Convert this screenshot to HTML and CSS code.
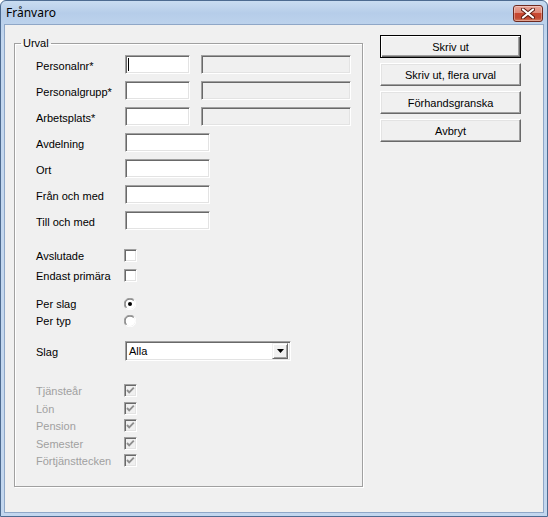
FILE: index.html
```html
<!DOCTYPE html>
<html>
<head>
<meta charset="utf-8">
<link rel="stylesheet" href="styles.css">
</head>
<body>
<div class="window">
  <div class="titlebar">
    <span class="title">Frånvaro</span>
    <div class="close">
      <svg width="14" height="11" viewBox="0 0 14 11"><path d="M2 1.5 L12 9.5 M12 1.5 L2 9.5" stroke="#5a1a10" stroke-width="4" stroke-linecap="round"/><path d="M2 1.5 L12 9.5 M12 1.5 L2 9.5" stroke="#fff" stroke-width="2.2" stroke-linecap="round"/></svg>
    </div>
  </div>
  <div class="client">
    <fieldset class="group">
      <legend>Urval</legend>
      <div class="inner">
        <div class="fields">
          <div class="frow"><span class="lbl">Personalnr*</span><div class="tb tb-s"><span class="caret"></span></div><div class="tb tb-w off"></div></div>
          <div class="frow"><span class="lbl">Personalgrupp*</span><div class="tb tb-s"></div><div class="tb tb-w off"></div></div>
          <div class="frow"><span class="lbl">Arbetsplats*</span><div class="tb tb-s"></div><div class="tb tb-w off"></div></div>
          <div class="frow"><span class="lbl">Avdelning</span><div class="tb tb-m"></div></div>
          <div class="frow"><span class="lbl">Ort</span><div class="tb tb-m"></div></div>
          <div class="frow"><span class="lbl">Från och med</span><div class="tb tb-m"></div></div>
          <div class="frow"><span class="lbl">Till och med</span><div class="tb tb-m"></div></div>
        </div>
        <div class="checks">
          <div class="crow"><span class="lbl lbl-c">Avslutade</span><span class="cb"></span></div>
          <div class="crow"><span class="lbl lbl-c">Endast primära</span><span class="cb"></span></div>
        </div>
        <div class="radios">
          <div class="rrow"><span class="lbl lbl-c">Per slag</span>
            <svg class="rb" width="12" height="12" viewBox="0 0 12 12"><circle cx="6" cy="6" r="5" fill="#fff"/><path d="M10.2 1.8 A5.9 5.9 0 0 0 1.8 10.2" fill="none" stroke="#a0a0a0" stroke-width="1"/><path d="M9.5 2.5 A4.9 4.9 0 0 0 2.5 9.5" fill="none" stroke="#696969" stroke-width="1"/><path d="M1.8 10.2 A5.9 5.9 0 0 0 10.2 1.8" fill="none" stroke="#fff" stroke-width="1"/><circle cx="6" cy="6" r="2" fill="#000"/></svg>
          </div>
          <div class="rrow"><span class="lbl lbl-c">Per typ</span>
            <svg class="rb" width="12" height="12" viewBox="0 0 12 12"><circle cx="6" cy="6" r="5" fill="#fff"/><path d="M10.2 1.8 A5.9 5.9 0 0 0 1.8 10.2" fill="none" stroke="#a0a0a0" stroke-width="1"/><path d="M9.5 2.5 A4.9 4.9 0 0 0 2.5 9.5" fill="none" stroke="#696969" stroke-width="1"/><path d="M1.8 10.2 A5.9 5.9 0 0 0 10.2 1.8" fill="none" stroke="#fff" stroke-width="1"/></svg>
          </div>
        </div>
        <div class="srow"><span class="lbl">Slag</span>
          <div class="combo"><span class="combo-text">Alla</span><span class="combo-btn"><svg width="7" height="4" viewBox="0 0 7 4"><path d="M0 0 H7 L3.5 4 Z" fill="#000"/></svg></span></div>
        </div>
        <div class="dchecks">
          <div class="drow"><span class="lbl lbl-c dis">Tjänsteår</span><span class="cb cb-off"><svg width="11" height="11" viewBox="0 0 11 11"><path d="M2 5 L4.2 7.3 L8.8 2.7" fill="none" stroke="#8f8f8f" stroke-width="1.9"/></svg></span></div>
          <div class="drow"><span class="lbl lbl-c dis">Lön</span><span class="cb cb-off"><svg width="11" height="11" viewBox="0 0 11 11"><path d="M2 5 L4.2 7.3 L8.8 2.7" fill="none" stroke="#8f8f8f" stroke-width="1.9"/></svg></span></div>
          <div class="drow"><span class="lbl lbl-c dis">Pension</span><span class="cb cb-off"><svg width="11" height="11" viewBox="0 0 11 11"><path d="M2 5 L4.2 7.3 L8.8 2.7" fill="none" stroke="#8f8f8f" stroke-width="1.9"/></svg></span></div>
          <div class="drow"><span class="lbl lbl-c dis">Semester</span><span class="cb cb-off"><svg width="11" height="11" viewBox="0 0 11 11"><path d="M2 5 L4.2 7.3 L8.8 2.7" fill="none" stroke="#8f8f8f" stroke-width="1.9"/></svg></span></div>
          <div class="drow"><span class="lbl lbl-c dis">Förtjänsttecken</span><span class="cb cb-off"><svg width="11" height="11" viewBox="0 0 11 11"><path d="M2 5 L4.2 7.3 L8.8 2.7" fill="none" stroke="#8f8f8f" stroke-width="1.9"/></svg></span></div>
        </div>
      </div>
    </fieldset>
    <div class="buttons">
      <div class="btn btn-default">Skriv ut</div>
      <div class="btn">Skriv ut, flera urval</div>
      <div class="btn">Förhandsgranska</div>
      <div class="btn">Avbryt</div>
    </div>
  </div>
</div>
</body>
</html>
```
FILE: styles.css
```css
html, body {
  margin: 0;
  padding: 0;
  background: #fff;
}
.window {
  width: 548px;
  height: 517px;
  box-sizing: border-box;
  border: 1px solid #4d6b91;
  border-radius: 6px 6px 0 0;
  background: linear-gradient(#c9dcf1 0px, #b6cde9 12px, #bcd2ec 23px, #c3d7ef 40px, #c3d7ef 100%);
  padding: 0 3px 3px 3px;
  display: flex;
  flex-direction: column;
}
.titlebar {
  height: 23px;
  display: flex;
  align-items: flex-start;
}
.title {
  font-family: "Noto Sans", "Open Sans", sans-serif;
  font-size: 12px;
  line-height: 16px;
  color: #000;
  padding: 4px 0 0 2px;
}
.close {
  margin-left: auto;
  margin-top: 4px;
  margin-right: 1px;
  width: 30px;
  height: 17px;
  box-sizing: border-box;
  border: 1px solid #6e2a20;
  border-radius: 3px;
  background: linear-gradient(#e9a598 0%, #de8877 45%, #c9462f 50%, #c24a33 80%, #d77a5c 100%);
  display: flex;
  align-items: center;
  justify-content: center;
  box-shadow: inset 0 0 0 1px rgba(255,255,255,0.35);
}
.client {
  flex: 1;
  border: 1px solid #8fa7c7;
  background: #f0f0f0;
  display: flex;
  align-items: flex-start;
  font-family: "Liberation Sans", Arial, sans-serif;
  font-size: 11px;
  color: #000;
}
.group {
  margin: 12px 0 0 9px;
  width: 349px;
  box-sizing: border-box;
  padding: 5px 0 19px 6px;
  border: 1px solid #a0a0a0;
  box-shadow: inset 1px 1px 0 #fff, 1px 1px 0 #fff;
  min-inline-size: 0;
}
.group legend {
  padding: 0 2px;
  font-size: 11px;
  line-height: 13px;
}
.inner {
  margin-left: 15px;
}
.lbl {
  width: 89px;
  flex: none;
  white-space: nowrap;
}
.lbl-c {
  width: 88px;
}
.dis {
  color: #a0a0a0;
}
.frow {
  height: 19px;
  margin-bottom: 7px;
  display: flex;
  align-items: center;
}
.frow .lbl {
  padding-top: 2px;
}
.tb {
  height: 19px;
  box-sizing: border-box;
  border: 1px solid;
  border-color: #a0a0a0 #fff #fff #a0a0a0;
  box-shadow: inset 1px 1px 0 #696969, inset -1px -1px 0 #e3e3e3;
  background: #fff;
  display: flex;
  align-items: center;
  padding-left: 2px;
}
.tb-s { width: 65px; }
.tb-m { width: 85px; }
.tb-w { width: 150px; margin-left: 11px; }
.off { background: #f0f0f0; }
.caret {
  width: 1px;
  height: 13px;
  background: #000;
}
.checks {
  margin-top: 19px;
}
.crow {
  height: 13px;
  margin-bottom: 7px;
  display: flex;
  align-items: center;
}
.crow .lbl, .rrow .lbl, .drow .lbl {
  padding-top: 1px;
}
.cb {
  width: 13px;
  height: 13px;
  box-sizing: border-box;
  border: 1px solid;
  border-color: #a0a0a0 #fff #fff #a0a0a0;
  box-shadow: inset 1px 1px 0 #696969, inset -1px -1px 0 #e3e3e3;
  background: #fff;
  display: flex;
  align-items: center;
  justify-content: center;
  flex: none;
}
.cb-off {
  background: #f0f0f0;
}
.cb svg {
  display: block;
}
.radios {
  margin-top: 15px;
}
.rrow {
  height: 13px;
  margin-bottom: 4px;
  display: flex;
  align-items: center;
}
.rb {
  display: block;
  flex: none;
}
.srow {
  margin-top: 14px;
  height: 20px;
  display: flex;
  align-items: center;
}
.srow .lbl {
  padding-top: 2px;
}
.combo {
  width: 166px;
  height: 20px;
  box-sizing: border-box;
  border: 1px solid;
  border-color: #a0a0a0 #fff #fff #a0a0a0;
  box-shadow: inset 1px 1px 0 #696969, inset -1px -1px 0 #e3e3e3;
  background: #fff;
  display: flex;
  align-items: center;
  padding: 2px;
}
.combo-text {
  padding-left: 1px;
  flex: 1;
}
.combo-btn {
  width: 16px;
  height: 16px;
  box-sizing: border-box;
  background: #f0f0f0;
  border: 1px solid;
  border-color: #f0f0f0 #696969 #696969 #f0f0f0;
  box-shadow: inset 1px 1px 0 #fff, inset -1px -1px 0 #a0a0a0;
  display: flex;
  align-items: center;
  justify-content: center;
}
.combo-btn svg { display: block; }
.dchecks {
  margin-top: 23px;
}
.drow {
  height: 13px;
  margin-bottom: 4.5px;
  display: flex;
  align-items: center;
}
.drow:last-child {
  margin-bottom: 0;
}
.buttons {
  margin: 10px 0 0 17px;
  width: 141px;
  display: flex;
  flex-direction: column;
  gap: 5px;
}
.btn {
  height: 23px;
  box-sizing: border-box;
  background: #f0f0f0;
  border: 1px solid;
  border-color: #fff #696969 #696969 #fff;
  box-shadow: inset -1px -1px 0 #a0a0a0, inset 1px 1px 0 #e3e3e3;
  display: flex;
  align-items: center;
  justify-content: center;
  padding-top: 1px;
}
.btn-default {
  border-color: #000;
  box-shadow: inset 1px 1px 0 #fff, inset -1px -1px 0 #696969, inset -2px -2px 0 #a0a0a0;
}
```
